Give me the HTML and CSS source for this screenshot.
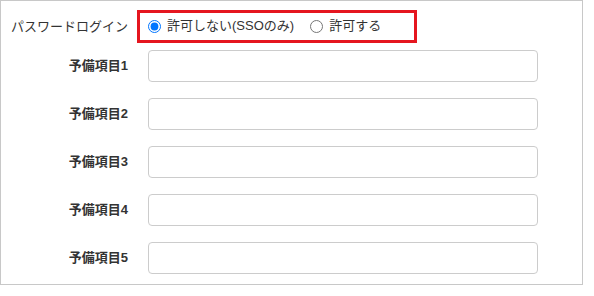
FILE: index.html
```html
<!DOCTYPE html>
<html lang="ja">
<head>
<meta charset="utf-8">
<link rel="stylesheet" href="styles.css">
</head>
<body>
<div class="panel">
  <div class="row row-radio">
    <div class="label label-normal">パスワードログイン</div>
    <div class="field">
      <div class="radio-group">
        <label class="radio"><input type="radio" name="pw" checked><span>許可しない(SSOのみ)</span></label>
        <label class="radio"><input type="radio" name="pw"><span>許可する</span></label>
      </div>
    </div>
  </div>
  <div class="row">
    <div class="label">予備項目1</div>
    <div class="field"><input class="text" type="text"></div>
  </div>
  <div class="row">
    <div class="label">予備項目2</div>
    <div class="field"><input class="text" type="text"></div>
  </div>
  <div class="row">
    <div class="label">予備項目3</div>
    <div class="field"><input class="text" type="text"></div>
  </div>
  <div class="row">
    <div class="label">予備項目4</div>
    <div class="field"><input class="text" type="text"></div>
  </div>
  <div class="row">
    <div class="label">予備項目5</div>
    <div class="field"><input class="text" type="text"></div>
  </div>
</div>
</body>
</html>
```
FILE: styles.css
```css
html, body {
  margin: 0;
  padding: 0;
  background: #fff;
}
body {
  font-family: "Liberation Sans", "Noto Sans CJK JP", sans-serif;
  font-size: 13px;
  color: #333;
}
.panel {
  box-sizing: border-box;
  width: 583px;
  height: 285px;
  border: 1px solid #c8c8c8;
  padding: 9px 0 10px 0;
  display: flex;
  flex-direction: column;
  gap: 16px;
}
.row {
  display: grid;
  grid-template-columns: 127px 390px;
  column-gap: 20px;
  align-items: center;
  height: 32px;
}
.row-radio {
  height: 33px;
  margin-bottom: -9px;
}
.label {
  text-align: right;
  font-weight: bold;
  white-space: nowrap;
  line-height: 16px;
}
.label-normal {
  font-weight: normal;
}
.field {
  display: flex;
  align-items: center;
}
.radio-group {
  box-sizing: border-box;
  margin-left: -11px;
  width: 280px;
  height: 33px;
  border: 3px solid #e5161f;
  padding: 0 8px;
  display: flex;
  align-items: center;
  gap: 16px;
}
.radio {
  display: flex;
  align-items: center;
  gap: 6px;
  line-height: 16px;
}
.radio input {
  margin: 0;
  width: 13px;
  height: 13px;
}
.radio span {
  position: relative;
  top: -1px;
}
.text {
  box-sizing: border-box;
  width: 390px;
  height: 32px;
  margin: 0;
  border: 1px solid #cccccc;
  border-radius: 4px;
  background: #fff;
  padding: 0 8px;
}
```
